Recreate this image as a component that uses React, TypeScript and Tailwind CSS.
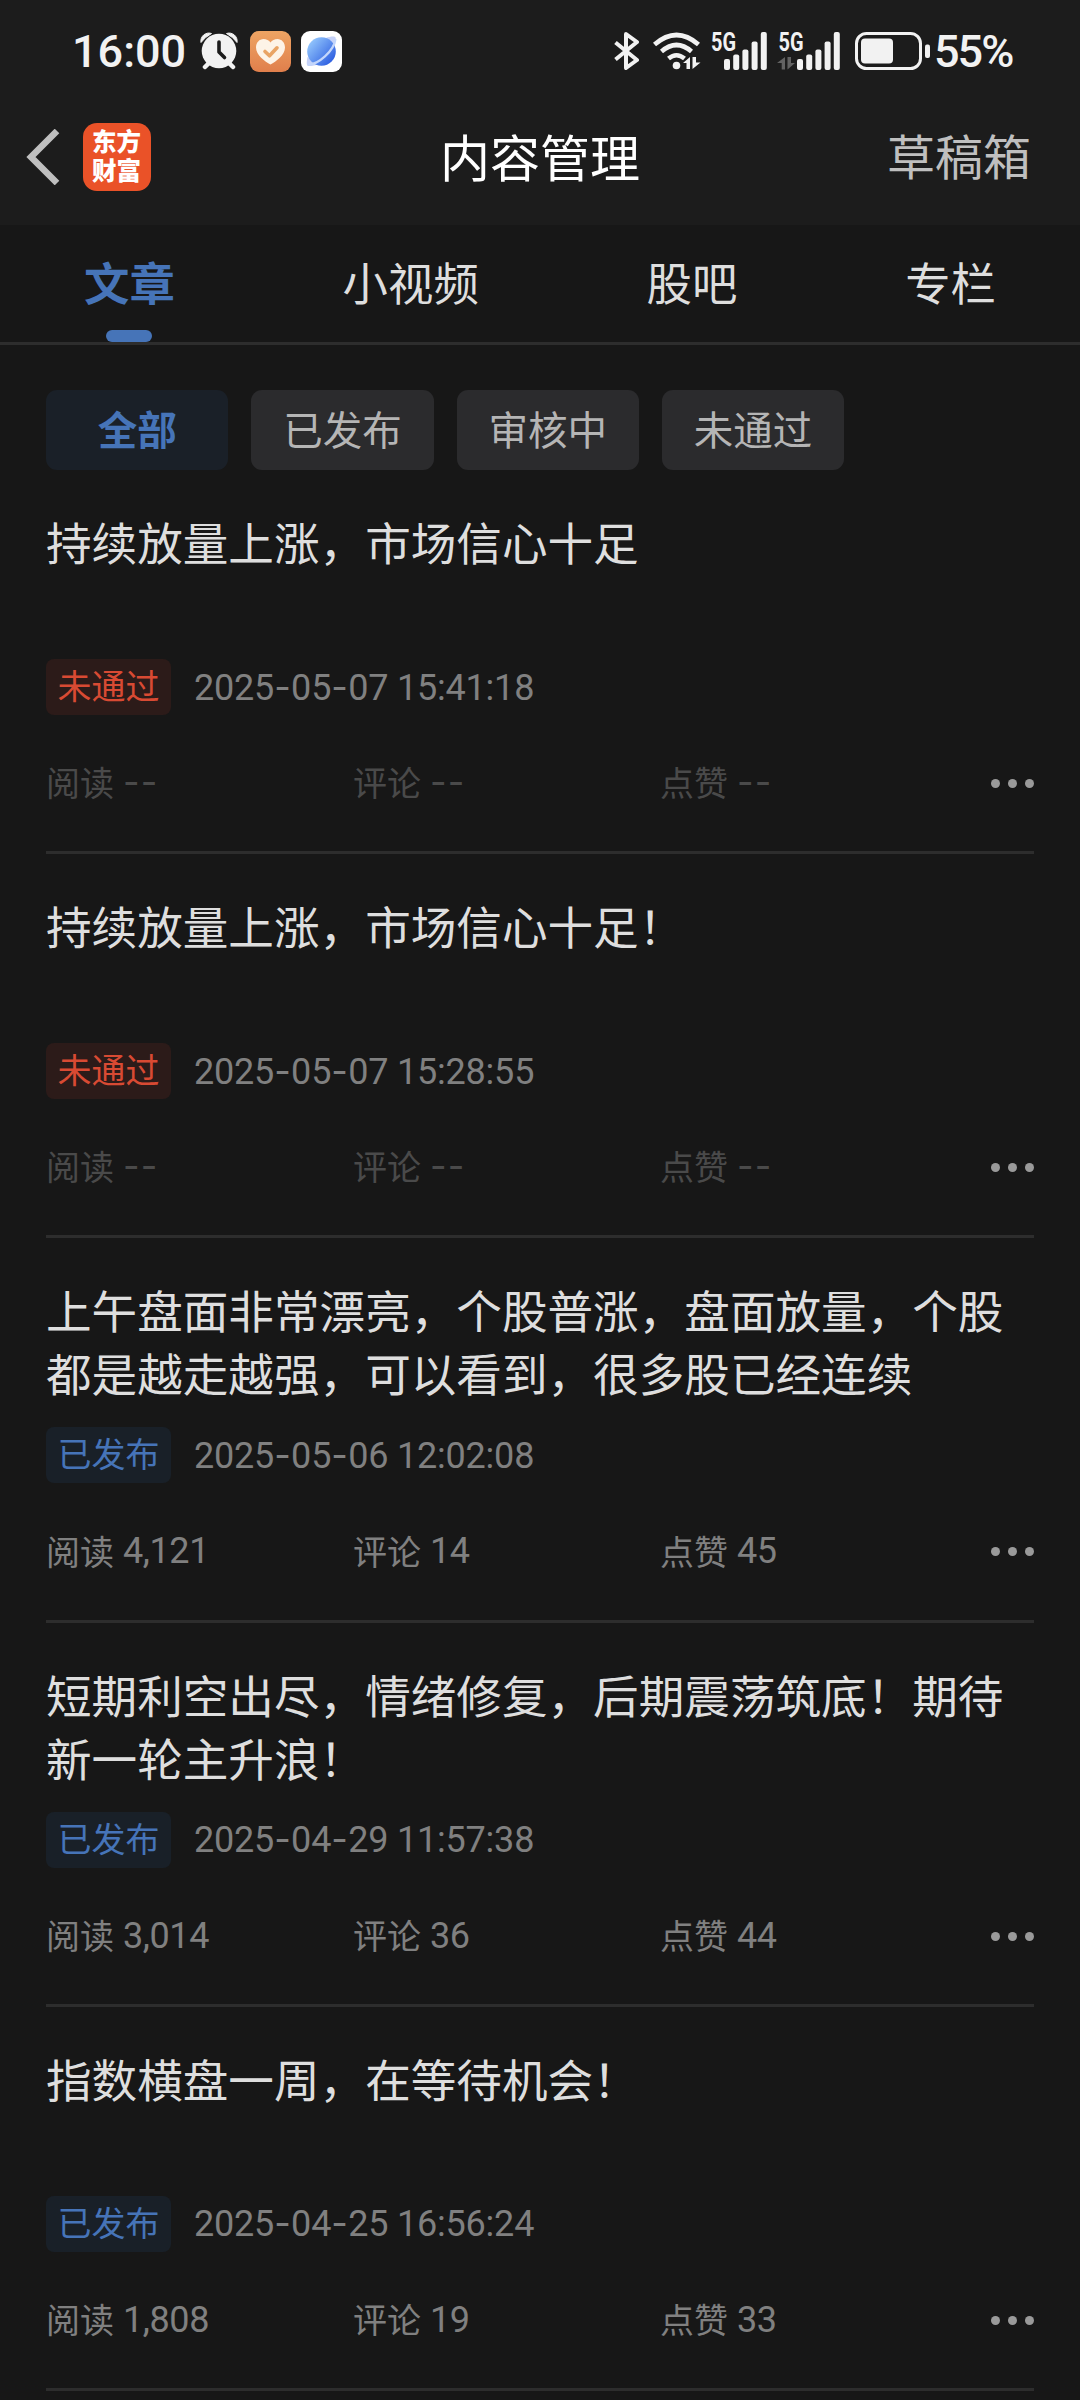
import clsx from "clsx";

type Status = "rejected" | "published";

interface Article {
    title: string;
    status: Status;
    date: string;
    reads?: string;
    comments?: string;
    likes?: string;
}

const tabs = ["文章", "小视频", "股吧", "专栏"];
const filters = ["全部", "已发布", "审核中", "未通过"];

const articles: Article[] = [
    { title: "持续放量上涨，市场信心十足", status: "rejected", date: "2025-05-07 15:41:18" },
    { title: "持续放量上涨，市场信心十足！", status: "rejected", date: "2025-05-07 15:28:55" },
    {
        title: "上午盘面非常漂亮，个股普涨，盘面放量，个股都是越走越强，可以看到，很多股已经连续",
        status: "published",
        date: "2025-05-06 12:02:08",
        reads: "4,121",
        comments: "14",
        likes: "45",
    },
    {
        title: "短期利空出尽，情绪修复，后期震荡筑底！期待新一轮主升浪！",
        status: "published",
        date: "2025-04-29 11:57:38",
        reads: "3,014",
        comments: "36",
        likes: "44",
    },
    {
        title: "指数横盘一周，在等待机会！",
        status: "published",
        date: "2025-04-25 16:56:24",
        reads: "1,808",
        comments: "19",
        likes: "33",
    },
];

function AlarmIcon() {
    return (
        <svg width="38" height="38" viewBox="0 0 38 38" className="ml-[15px]">
            <path d="M9 31l-4 4M29 31l4 4" stroke="#f2f2f2" strokeWidth="4.5" strokeLinecap="round" fill="none" />
            <path d="M1 10.5A8 8 0 0 1 11.5 1.5Q5 5 1 10.5zM37 10.5A8 8 0 0 0 26.5 1.5Q33 5 37 10.5z" fill="#f2f2f2" stroke="#f2f2f2" strokeWidth="1" strokeLinejoin="round" />
            <circle cx="19" cy="19" r="17.3" fill="#f2f2f2" />
            <path d="M19 10v10l5.500 5.500" stroke="#1c1c1c" strokeWidth="3.6" fill="none" strokeLinecap="round" strokeLinejoin="round" />
        </svg>
    );
}

function HealthIcon() {
    return (
        <svg width="41" height="41" viewBox="0 0 41 41" className="ml-3">
            <defs>
                <linearGradient id="health" x1="0" y1="0" x2="0" y2="1">
                    <stop offset="0" stopColor="#eea463" />
                    <stop offset="1" stopColor="#e07f4c" />
                </linearGradient>
            </defs>
            <rect width="41" height="41" rx="9" fill="url(#health)" />
            <path d="M20.5 33.500C15 30.500 6 24 6 16.500C6 11.500 9.500 8 13.500 8c3 0 5.500 1.500 7 3.500C22 9.500 24.500 8 27.500 8c4 0 7.500 3.500 7.500 8.500c0 7.500-9 14-14.500 17z" fill="#fdf3e7" />
            <path d="M15 20.500l4.500 4.300l7.500-8" stroke="#e9a465" strokeWidth="3.6" fill="none" strokeLinecap="round" strokeLinejoin="round" />
        </svg>
    );
}

function BrowserIcon() {
    return (
        <svg width="41" height="41" viewBox="0 0 41 41" className="ml-2.5">
            <defs>
                <linearGradient id="globe" x1="0.1" y1="0.2" x2="0.9" y2="0.9">
                    <stop offset="0" stopColor="#8fc2fb" />
                    <stop offset="1" stopColor="#2a5be0" />
                </linearGradient>
            </defs>
            <rect width="41" height="41" rx="9" fill="#fff" />
            <path d="M6.500 26C5 33 6 35.500 8 35c3 0 7-.5 10-2zM25 7c4-1.500 9-2 9.500-.5c.8 2-.5 6.500-2 10z" fill="#c6d2f8" />
            <circle cx="20.5" cy="20.5" r="14.3" fill="url(#globe)" />
            <path d="M7 33.500C17 34 33 20 34.500 8" stroke="#c3d6fb" strokeWidth="2.2" fill="none" />
        </svg>
    );
}

function BluetoothIcon() {
    return (
        <svg width="26" height="38" viewBox="0 0 26 38">
            <path d="M1.500 10.500L23 28L12 36V2l11 8L1.500 27.500" stroke="#f2f2f2" strokeWidth="4" fill="none" strokeLinejoin="round" />
        </svg>
    );
}

function WifiIcon() {
    return (
        <svg width="48" height="38" viewBox="0 0 48 38" className="ml-[13px]">
            <g stroke="#f2f2f2" strokeWidth="4.6" fill="none">
                <path d="M1.500 12.500Q23.500-6.500 45.500 12.500" />
                <path d="M8.500 19.500Q23.500 6.500 38.500 19.500" />
                <path d="M15.500 26.500Q23.500 20 31.500 26.500" />
            </g>
            <circle cx="23.5" cy="33.5" r="3.8" fill="#f2f2f2" />
            <path d="M37 25v12h-3.500v-6H30zM39.500 25v12l8-6.500H43V25z" fill="#f2f2f2" />
        </svg>
    );
}

function SignalIcon({ data }: { data?: boolean }) {
    return (
        <svg
            width={data ? 63 : 57}
            height="46"
            viewBox={data ? "-6 -8 63 46" : "0 -8 57 46"}
            className={clsx("-mt-2", data ? "ml-[10px]" : "ml-[9px]")}
        >
            <text x={data ? -4.500 : 1} y="18.5" fill="#f2f2f2" fontSize="25" fontWeight="700" fontFamily="Roboto, sans-serif" textLength="25" lengthAdjust="spacingAndGlyphs">
                5G
            </text>
            {data && <path d="M2 25v12.500h-3.300V31H-6zM4.500 25v12.500L12 31H8v-6z" fill="#626262" />}
            <g fill="#f2f2f2">
                <rect x="14" y="27" width="6" height="11" rx="2" />
                <rect x="23.2" y="22.5" width="6" height="15.5" rx="2" />
                <rect x="32.4" y="17.5" width="6" height="20.5" rx="2" />
                <rect x="41.6" y="9.5" width="6" height="28.5" rx="2" />
                <rect x="50.8" y="0" width="6" height="38" rx="2" />
            </g>
        </svg>
    );
}

function BatteryIcon() {
    return (
        <svg width="75" height="38" viewBox="0 0 75 38" className="ml-[15px]">
            <rect x="1.5" y="1.5" width="64" height="35" rx="10" fill="none" stroke="#f2f2f2" strokeWidth="3" />
            <rect x="6" y="6.5" width="32" height="25" rx="4" fill="#f2f2f2" />
            <rect x="70" y="12.5" width="5" height="13.5" rx="2" fill="#f2f2f2" />
        </svg>
    );
}

function StatusBar() {
    return (
        <div className="flex h-[102px] items-center justify-between pl-[72px] pr-[66px] font-[Roboto,sans-serif] text-[45px] font-medium leading-none text-[#f2f2f2]">
            <div className="flex items-center">
                <span className="w-[113px]">16:00</span>
                <AlarmIcon />
                <HealthIcon />
                <BrowserIcon />
            </div>
            <div className="flex items-center">
                <BluetoothIcon />
                <WifiIcon />
                <SignalIcon />
                <SignalIcon data />
                <BatteryIcon />
                <span className="ml-1 w-[80px] tracking-[-2px]">55%</span>
            </div>
        </div>
    );
}

function NavBar() {
    return (
        <div className="grid h-[123px] grid-cols-[1fr_auto_1fr] items-start px-[26px]">
            <div className="flex items-center pt-[21px]">
                <svg width="34" height="56" viewBox="0 0 34 56">
                    <path d="M31 2L5 28L31 54" stroke="#bfbfbf" strokeWidth="6.5" fill="none" />
                </svg>
                <div className="ml-[23px] h-[68px] w-[68px] rounded-[14px] bg-[#ea5228] px-[9px] pt-[3px]">
                    <p className="w-[50px] break-all text-[24.5px] font-black leading-[29px] text-white">东方财富</p>
                </div>
            </div>
            <h1 className="pt-[23px] text-[50px] leading-[60px] text-white">内容管理</h1>
            <span className="pr-[23px] pt-[22px] text-right text-[48px] leading-[60px] text-[#bfbfbf]">草稿箱</span>
        </div>
    );
}

function Stat({ label, value }: { label: string; value?: string }) {
    return (
        <div className={clsx("flex w-[307px] items-center whitespace-pre", value ? "text-[#808080]" : "text-[#4a4a4a]")}>
            <span className="text-[34px] leading-[50px]">{label}</span>
            {value ? (
                <span className="ml-[9px] pt-px font-[Roboto,sans-serif] text-[36px] leading-[50px] tracking-[-0.4px]">{value}</span>
            ) : (
                <span className="ml-[9px] font-[Inter,sans-serif] text-[36px] leading-[50px] tracking-[1.2px]">--</span>
            )}
        </div>
    );
}

// Roboto's hyphen is too short for the date, so it is set in Inter
function DateText({ value }: { value: string }) {
    return (
        <time className="ml-[23px] whitespace-pre font-[Roboto,sans-serif] text-[36px] leading-none tracking-[-0.2px] text-[#808080]">
            {value.split(/(-)/).map((part, index) =>
                part === "-" ? (
                    <span key={index} className="font-[Inter,sans-serif] tracking-[0.4px]">
                        -
                    </span>
                ) : (
                    part
                )
            )}
        </time>
    );
}

function ArticleItem({ article }: { article: Article }) {
    return (
        <article className="flex h-[384.2px] flex-col border-b-[3px] border-[#2d2d2d] pt-[40px]">
            <h2 className="h-[126px] w-[970px] text-[45.6px] leading-[63px] text-[#dedede]">{article.title}</h2>
            <div className="mt-[23px] flex items-center">
                <span
                    className={clsx(
                        "flex h-14 w-[125px] items-center justify-center rounded-lg pb-1 text-[34px] leading-none",
                        article.status === "rejected" ? "bg-[#2c1b19] text-[#d84a33]" : "bg-[#192028] text-[#4674b8]"
                    )}
                >
                    {article.status === "rejected" ? "未通过" : "已发布"}
                </span>
                <DateText value={article.date} />
            </div>
            <div className="mt-[42px] flex items-center">
                <Stat label="阅读" value={article.reads} />
                <Stat label="评论" value={article.comments} />
                <Stat label="点赞" value={article.likes} />
                <div className="ml-auto flex gap-2 pt-0.5">
                    <i className="size-[9px] rounded-full bg-[#9a9a9a]" />
                    <i className="size-[9px] rounded-full bg-[#9a9a9a]" />
                    <i className="size-[9px] rounded-full bg-[#9a9a9a]" />
                </div>
            </div>
        </article>
    );
}

export default function App() {
    return (
        <div className="h-[2400px] w-[1080px] overflow-hidden bg-[#171717] font-['Noto_Sans_CJK_SC',sans-serif]">
            <header className="bg-[#1c1c1c]">
                <StatusBar />
                <NavBar />
            </header>

            <nav className="flex h-[120px] justify-between border-b-[3px] border-[#2d2d2d] px-[84px]">
                {tabs.map((tab, index) => (
                    <div
                        key={tab}
                        className={clsx(
                            "flex flex-col items-center justify-between pt-[26px] text-[45.4px] leading-[60px]",
                            index === 0 ? "font-bold text-[#4674b8]" : "text-[#dedede]"
                        )}
                    >
                        {tab}
                        {index === 0 && <div className="h-3 w-[46px] rounded-md bg-[#4674b8]" />}
                    </div>
                ))}
            </nav>

            <div className="flex gap-[23px] px-[46px] pt-[45px]">
                {filters.map((filter, index) => (
                    <button
                        key={filter}
                        className={clsx(
                            "h-20 w-[182.3px] rounded-[11px] pb-[5px] text-[39.5px] leading-none",
                            index === 0 ? "bg-[#1a2028] font-bold text-[#4674b8]" : "bg-[#2b2b2d] text-[#b5b5b5]"
                        )}
                    >
                        {filter}
                    </button>
                ))}
            </div>

            <main className="px-[46px]">
                {articles.map((article) => (
                    <ArticleItem key={article.date} article={article} />
                ))}
            </main>
        </div>
    );
}
